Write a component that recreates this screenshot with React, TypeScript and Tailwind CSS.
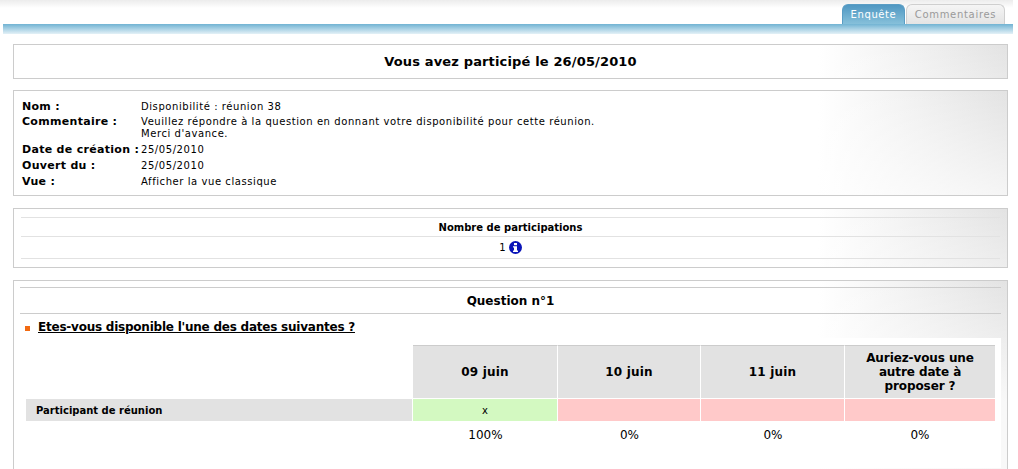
const cardBg = "bg-[linear-gradient(to_bottom,rgba(255,255,255,0),rgba(255,255,255,0.75)_120px),linear-gradient(to_right,#ffffff_81%,#e3e3e3_100%)]";

const infos = [
  { label: "Nom :", value: ["Disponibilité : réunion 38"] },
  {
    label: "Commentaire :",
    value: [
      "Veuillez répondre à la question en donnant votre disponibilité pour cette réunion.",
      "Merci d'avance.",
    ],
  },
  { label: "Date de création :", value: ["25/05/2010"] },
  { label: "Ouvert du :", value: ["25/05/2010"] },
  { label: "Vue :", value: ["Afficher la vue classique"] },
];

const dates = ["09 juin", "10 juin", "11 juin"];
const colClass = ["w-[145px]", "w-[143px]", "w-[144px]", "w-[150px]"];

export default function App() {
  return (
    <div className="relative w-[1018px] h-[469px] overflow-hidden bg-white text-black font-['DejaVu_Sans',sans-serif]">
      <div className="w-[1013px] pl-[3px]">
        {/* header + tabs */}
        <div className="h-[24px] -ml-[3px] pl-[3px] bg-[linear-gradient(to_bottom,#ececec_0px,#ffffff_8px)] flex justify-end items-end pr-[8px] gap-[1px]">
          <div className="w-[63px] h-[20px] rounded-t-[6px] border border-b-0 border-[#5a9dc4] bg-[linear-gradient(to_bottom,#4f97c2,#86c0da)] text-white text-[10px] tracking-[0.6px] flex items-center justify-center">
            Enquête
          </div>
          <div className="w-[99px] h-[20px] rounded-t-[6px] border border-b-0 border-[#cfcfcf] bg-[linear-gradient(to_bottom,#f5f5f5,#e4e4e4)] text-[#9a9a9a] text-[10px] tracking-[0.7px] flex items-center justify-center">
            Commentaires
          </div>
        </div>
        <div className="h-[10px] bg-[linear-gradient(to_bottom,#71b3d3,#e4f1f7)]" />

        <div className="pl-[10px] pr-[5px]">
          {/* title */}
          <div className={`mt-[10px] h-[35px] border border-[#cccccc] ${cardBg} flex items-center justify-center text-[13px] tracking-[0.15px] font-bold`}>
            Vous avez participé le 26/05/2010
          </div>

          {/* infos */}
          <div className={`mt-[11px] h-[106px] border border-[#cccccc] ${cardBg} pl-[8px] pt-[10px] text-[10px] leading-[12px]`}>
            {infos.map((row) => (
              <div key={row.label} className="flex mb-[4px] first:mb-[3px]">
                <div className="w-[119px] shrink-0 font-bold text-[11px] tracking-[0.3px] whitespace-nowrap">{row.label}</div>
                <div className="tracking-[0.57px]">
                  {row.value.map((line) => (
                    <div key={line}>{line}</div>
                  ))}
                </div>
              </div>
            ))}
          </div>

          {/* participations */}
          <div className={`mt-[12px] h-[60px] border border-[#cccccc] ${cardBg} px-[7px] pt-[8px] text-[10px]`}>
            <div className="h-[20px] border-t border-b border-[#e2e2e2] flex items-center justify-center font-bold">
              Nombre de participations
            </div>
            <div className="h-[22px] border-b border-[#e2e2e2] flex items-center justify-center gap-[3px]">
              <span>1</span>
              <svg width="13" height="13" viewBox="0 0 13 13">
                <circle cx="6.5" cy="6.5" r="6.5" fill="#0a14b8" />
                <rect x="5" y="2" width="3" height="2.2" fill="#fff" />
                <path d="M4 5.2h4v4.4h1v1.4H4V9.6h1V6.4H4z" fill="#fff" />
              </svg>
            </div>
          </div>

          {/* question */}
          <div className={`mt-[12px] h-[200px] border border-[#cccccc] ${cardBg}`}>
            <div className="mx-[6px] mt-[6px] h-[27px] border-t border-b border-[#cccccc] flex items-center justify-center text-[12px] font-bold">
              Question n°1
            </div>
            <div className="mx-[6px] h-[24px] pt-[2px] flex items-center text-[12px] tracking-[-0.23px] font-bold underline">
              <span className="w-[5px] h-[5px] bg-[#f26a12] ml-[5px] mr-[8px] mt-[2px]" />
              <span>Etes-vous disponible l'une des dates suivantes ?</span>
            </div>
            <div className="ml-[6px] mr-[6px] bg-white h-[130px] pl-[6px] pt-[7px]">
              <div className="flex h-[53px]">
                <div className="w-[387px]" />
                {dates.map((d, i) => (
                  <div key={d} className={`${colClass[i]} bg-[#e2e2e2] border-t border-[#cccccc] border-r border-r-white flex items-center justify-center text-[12px] tracking-[0.2px] font-bold`}>
                    {d}
                  </div>
                ))}
                <div className={`${colClass[3]} bg-[#e2e2e2] border-t border-[#cccccc] flex items-center justify-center text-center text-[12px] tracking-[-0.1px] leading-[14px] font-bold`}>
                  Auriez-vous une<br />autre date à<br />proposer ?
                </div>
              </div>
              <div className="flex h-[23px] border-t border-white">
                <div className="w-[387px] bg-[#e2e2e2] border-r border-white pl-[10px] flex items-center text-[10px] font-bold">
                  Participant de réunion
                </div>
                <div className={`${colClass[0]} bg-[#d3f9c1] border-r border-white flex items-center justify-center text-[10px]`}>x</div>
                <div className={`${colClass[1]} bg-[#ffc9c9] border-r border-white`} />
                <div className={`${colClass[2]} bg-[#ffc9c9] border-r border-white`} />
                <div className={`${colClass[3]} bg-[#ffc9c9]`} />
              </div>
              <div className="flex h-[28px] text-[12px]">
                <div className="w-[387px]" />
                {["100%", "0%", "0%", "0%"].map((p, i) => (
                  <div key={i} className={`${colClass[i]} flex items-center justify-center`}>{p}</div>
                ))}
              </div>
            </div>
          </div>
        </div>
      </div>
    </div>
  );
}
